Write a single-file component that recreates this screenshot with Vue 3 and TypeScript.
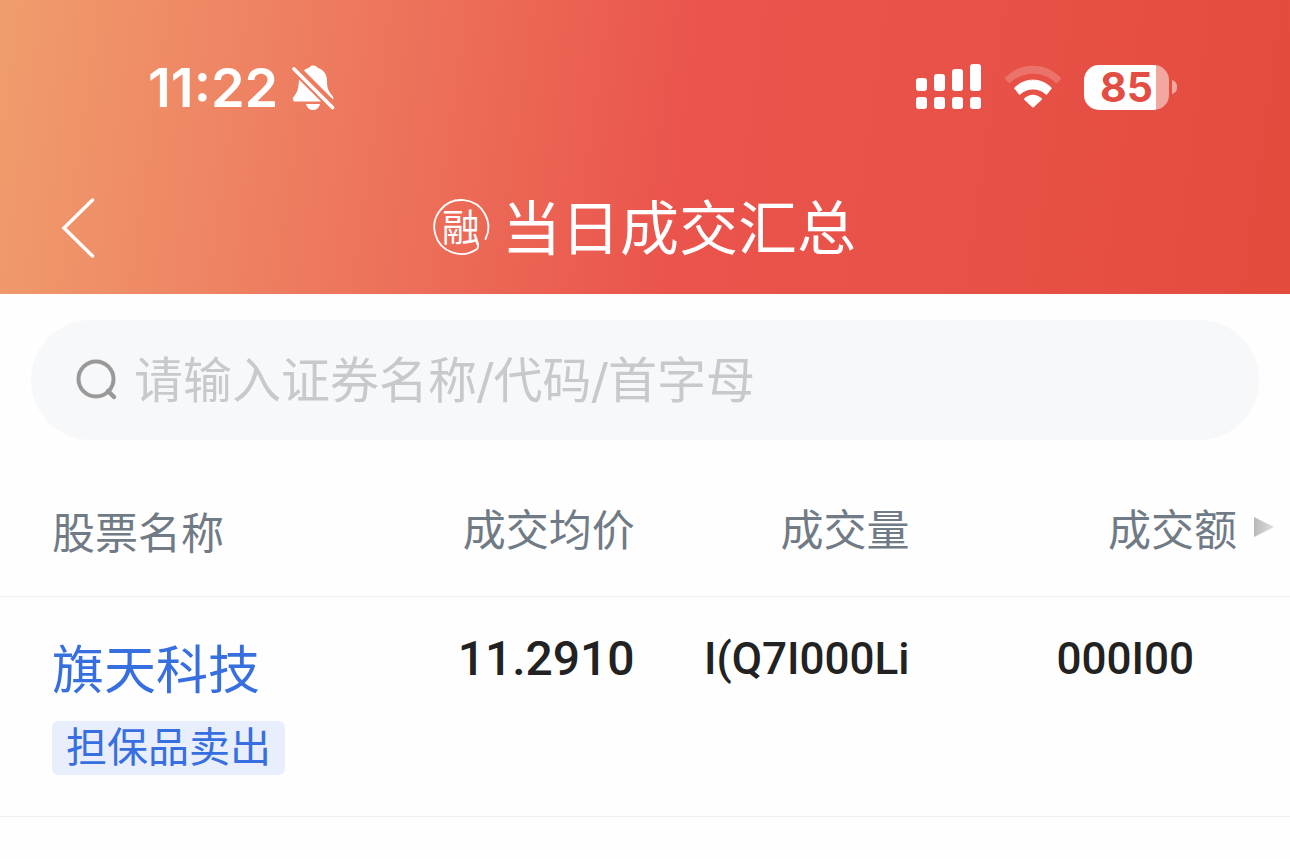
<script setup lang="ts">
import { ref } from 'vue'

interface Trade {
  name: string
  tag: string
  price: string
  volume: string
  amount: string
}

const keyword = ref('')
const trades: Trade[] = [
  { name: '旗天科技', tag: '担保品卖出', price: '11.2910', volume: 'I(Q7I000Li', amount: '000I00' },
]
</script>

<template>
  <main class="page">
    <header class="top">
      <div class="status">
        <div class="status-left">
          <span class="time">11:22</span>
          <svg class="bell" viewBox="0 0 44 46" aria-hidden="true">
            <path d="M12 5.5C14 3.5 16 3 17.500 2.500C18.500 0.800 20 0.500 21.500 0.500C23 0.500 24.500 1.200 25.500 2.800C32 5 35 9.500 35 16C35 24 37 27 40.500 31C41.300 32 41.500 33 41 34.500Z" fill="#fff" />
            <path d="M7 14.500L29 36.500H3.500C1 36.500 0 34 1.500 32C5 27.500 6.500 25 7 14.500Z" fill="#fff" />
            <path d="M14 39H28C27 43 24.500 45 21 45S15 43 14 39Z" fill="#fff" />
            <path d="M2 4L40.500 42.500" stroke="#fff" stroke-width="3.600" stroke-linecap="round" />
          </svg>
        </div>
        <div class="status-right">
          <svg class="signal" viewBox="0 0 66 46" fill="#fff" aria-hidden="true">
            <rect x="0" y="14" width="11" height="13" rx="3" />
            <rect x="18" y="10" width="11" height="17" rx="3" />
            <rect x="36" y="5" width="11" height="22" rx="3" />
            <rect x="54" y="0" width="11" height="27" rx="3" />
            <rect x="0" y="33" width="11" height="12" rx="3" />
            <rect x="18" y="33" width="11" height="12" rx="3" />
            <rect x="36" y="33" width="11" height="12" rx="3" />
            <rect x="54" y="33" width="11" height="12" rx="3" />
          </svg>
          <svg class="wifi" viewBox="0 0 58 44" aria-hidden="true">
            <path d="M0.500 13.500C16 -3.500 42 -3.500 57.500 13.500L52.500 18.500C39.500 5.500 18.500 5.500 5.500 18.500Z" fill="#fff" fill-opacity=".2" />
            <path d="M10.500 23C21 12.500 37 12.500 47.500 23L42.500 29.500C34.500 22 23.500 22 15.500 29.500Z" fill="#fff" stroke="#fff" stroke-linejoin="round" />
            <path d="M21 34C26 29.500 32 29.500 37 34L29 41.500Z" fill="#fff" stroke="#fff" stroke-width="2" stroke-linejoin="round" />
          </svg>
          <div class="battery">
            <span class="level">85</span>
            <svg class="cap" viewBox="0 0 5 14" aria-hidden="true">
              <path d="M0 0C7 2 7 12 0 14Z" fill="#fff" fill-opacity=".5" />
            </svg>
          </div>
        </div>
      </div>
      <nav class="nav">
        <button class="back" type="button" aria-label="返回">
          <svg viewBox="0 0 34 60" aria-hidden="true">
            <path d="M31.500 2L3 30L31.500 58" fill="none" stroke="#fff" stroke-width="3.500" stroke-linecap="round" />
          </svg>
        </button>
        <div class="heading">
          <svg class="seal" viewBox="0 0 58 58" aria-hidden="true">
            <path d="M53.500 41A27 27 0 1 0 45 51Q46.500 49.500 46 45.500" fill="none" stroke="#fff" stroke-width="1.800" stroke-linecap="round" />
            <text class="seal-text" x="29" y="43" text-anchor="middle" fill="#fff">融</text>
          </svg>
          <h1>当日成交汇总</h1>
        </div>
      </nav>
    </header>

    <label class="search">
      <svg viewBox="0 0 42 42" aria-hidden="true">
        <circle cx="20" cy="20" r="17.500" fill="none" stroke="#999" stroke-width="4" />
        <path d="M32 32L38 38" stroke="#999" stroke-width="4.500" stroke-linecap="round" />
      </svg>
      <input v-model="keyword" type="text" aria-label="搜索证券" placeholder="请输入证券名称/代码/首字母" />
    </label>

    <table>
      <colgroup>
        <col class="c-name" />
        <col class="c-price" />
        <col class="c-volume" />
        <col class="c-amount" />
      </colgroup>
      <thead>
        <tr>
          <th class="name" scope="col">股票名称</th>
          <th scope="col">成交均价</th>
          <th scope="col">成交量</th>
          <th scope="col">
            <span class="more">
              成交额
              <svg viewBox="0 0 22 20" aria-hidden="true">
                <defs>
                  <linearGradient id="arrow">
                    <stop offset="0" stop-color="#b9b9b9" />
                    <stop offset="1" stop-color="#dedede" />
                  </linearGradient>
                </defs>
                <path d="M1 0L21 10L1 20Z" fill="url(#arrow)" />
              </svg>
            </span>
          </th>
        </tr>
      </thead>
      <tbody>
        <tr v-for="trade in trades" :key="trade.name">
          <td class="name">
            <a href="#">{{ trade.name }}</a>
            <span class="tag">{{ trade.tag }}</span>
          </td>
          <td>{{ trade.price }}</td>
          <td class="small">{{ trade.volume }}</td>
          <td class="small amount">{{ trade.amount }}</td>
        </tr>
      </tbody>
    </table>
  </main>
</template>

<style>
body {
  background: #fefefe;
}
</style>

<style scoped>
.page {
  font-family: "Liberation Sans", "Noto Sans CJK SC", sans-serif;
}

svg {
  display: block;
  flex: none;
}

.top {
  padding-bottom: 12px;
  color: #fff;
  background: linear-gradient(98deg, #f09d6d 0%, #ee8262 20%, #ea544c 53%, #e85147 75%, #e34b3d 100%);
}

.status {
  display: flex;
  align-items: center;
  justify-content: space-between;
  height: 174px;
  padding: 0 113px 0 148px;
}

.status-left {
  display: flex;
  align-items: center;
  gap: 14px;
  padding-top: 2px;
}

.time {
  font: 600 54px/64px Inter, sans-serif;
}

.bell {
  width: 44px;
  height: 46px;
}

.status-right {
  display: flex;
  align-items: center;
  gap: 22px;
}

.signal {
  width: 66px;
  height: 46px;
}

.wifi {
  width: 58px;
  height: 44px;
}

.battery {
  display: flex;
  align-items: center;
  gap: 3px;
}

.level {
  box-sizing: border-box;
  width: 85px;
  height: 45px;
  padding-left: 16px;
  border-radius: 15px;
  background: linear-gradient(90deg, #fff 72px, rgba(255, 255, 255, 0.5) 72px);
  color: #e24e43;
  font: 700 41px/45px Inter, sans-serif;
}

.cap {
  width: 5px;
  height: 14px;
}

.nav {
  display: grid;
  grid-template-columns: 1fr auto 1fr;
  align-items: center;
  height: 108px;
}

.back {
  justify-self: start;
  margin-left: 61px;
  padding: 0;
  border: 0;
  background: none;
}

.back svg {
  width: 34px;
  height: 60px;
}

.heading {
  display: flex;
  align-items: center;
  gap: 12px;
  padding-right: 2px;
}

.seal {
  width: 58px;
  height: 58px;
  margin-bottom: 2px;
  overflow: visible;
}

.seal-text {
  font: 400 38px "Noto Sans CJK SC", sans-serif;
}

h1 {
  margin: 0;
  padding-top: 4px;
  font-size: 59px;
  font-weight: 400;
  line-height: 80px;
}

.search {
  display: flex;
  align-items: center;
  gap: 16px;
  height: 120px;
  margin: 26px 31px 0;
  padding: 0 45px;
  border-radius: 60px;
  background: #f7f8fa;
}

.search svg {
  width: 42px;
  height: 42px;
}

.search input {
  flex: 1;
  min-width: 0;
  height: 80px;
  padding: 2px 0 0;
  border: 0;
  outline: 0;
  background: none;
  color: #222;
  font: 400 49px "DejaVu Sans", "Noto Sans CJK SC", sans-serif;
}

.search input::placeholder {
  color: #c8c9cc;
  opacity: 1;
}

table {
  width: 100%;
  margin-top: 24px;
  border-collapse: collapse;
  table-layout: fixed;
}

.c-name {
  width: 28%;
}

.c-price {
  width: 21.2%;
}

.c-volume {
  width: 21.3%;
}

.c-amount {
  width: 29.5%;
}

tr {
  border-bottom: 1px solid #eee;
}

th {
  height: 126px;
  padding: 0 0 6px;
  color: #707b86;
  font-size: 43px;
  font-weight: 400;
  text-align: right;
  white-space: nowrap;
}

th.name {
  padding: 3px 0 3px 52px;
  text-align: left;
}

.more {
  display: flex;
  align-items: center;
  justify-content: flex-end;
  gap: 16px;
  padding-right: 15px;
}

.more svg {
  width: 22px;
  height: 20px;
}

td {
  height: 181px;
  padding: 32px 0 6px;
  color: #222;
  font: 500 48px/60px Roboto, sans-serif;
  text-align: right;
  vertical-align: top;
  white-space: nowrap;
}

td.name {
  padding-left: 52px;
  font: 400 52px/76px "Noto Sans CJK SC", sans-serif;
  text-align: left;
}

td.small {
  font-size: 44px;
}

td.amount {
  padding-right: 96px;
}

.name a {
  display: block;
  color: #376fe0;
  text-decoration: none;
}

.tag {
  display: block;
  width: fit-content;
  margin-top: 16px;
  padding: 0 14px 8px;
  border-radius: 6px;
  background: #e8eefb;
  color: #376fe0;
  font-size: 41px;
  line-height: 46px;
}
</style>
